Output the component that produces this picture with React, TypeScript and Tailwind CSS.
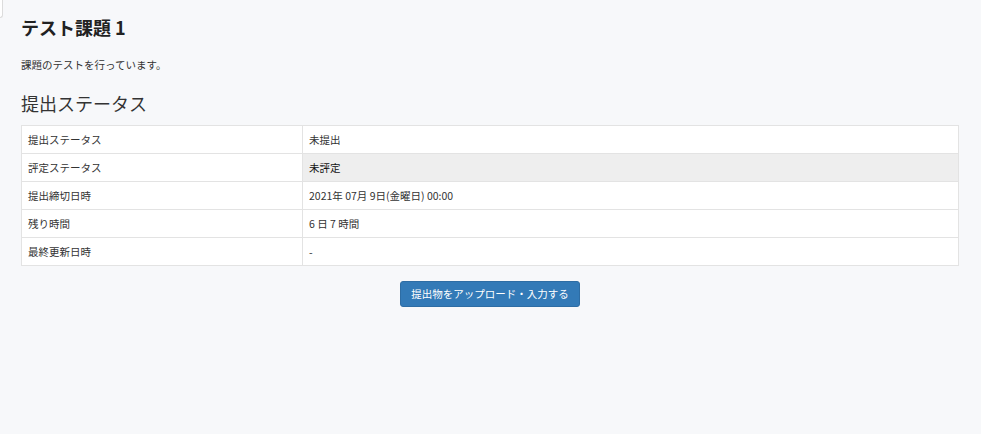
import React from "react";

const rows = [
  { label: "提出ステータス", value: "未提出", shaded: false },
  { label: "評定ステータス", value: "未評定", shaded: true },
  { label: "提出締切日時", value: "2021年 07月 9日(金曜日) 00:00", shaded: false },
  { label: "残り時間", value: "6 日 7 時間", shaded: false },
  { label: "最終更新日時", value: "-", shaded: false },
];

export default function App() {
  return (
    <div
      className="relative min-h-[434px] w-full bg-[#f7f8fa] text-[#333] px-[21px] pt-[16px]"
      style={{ fontFamily: '"Noto Sans CJK JP", "Liberation Sans", sans-serif' }}
    >
      {/* small corner tab */}
      <div className="absolute left-0 top-0 h-[18px] w-[3px] border-r border-b border-[#dcdcdc] rounded-br-[3px] bg-white"></div>

      <h2 className="text-[18px] font-bold leading-[22px] text-[#222]">テスト課題 1</h2>

      <p className="mt-[19px] text-[10.5px] leading-[16px]">課題のテストを行っています。</p>

      <h3 className="mt-[18px] text-[18px] leading-[24px] text-[#333]">提出ステータス</h3>

      <table className="mt-[10px] w-[938px] border-collapse bg-white text-[10.5px]">
        <tbody>
          {rows.map((row) => (
            <tr key={row.label} className="h-[28px]">
              <td className="w-[281px] border border-[#e3e3e3] px-[6px] align-middle">{row.label}</td>
              <td
                className={`border border-[#e3e3e3] px-[6px] align-middle ${
                  row.shaded ? "bg-[#eeeeee] text-[#111]" : ""
                }`}
              >
                {row.value}
              </td>
            </tr>
          ))}
        </tbody>
      </table>

      <div className="mt-[15px] flex w-[938px] justify-center">
        <button className="h-[26px] rounded-[3px] border border-[#2e6da4] bg-[#337ab7] px-[10px] text-[10.5px] text-white">
          提出物をアップロード・入力する
        </button>
      </div>
    </div>
  );
}
